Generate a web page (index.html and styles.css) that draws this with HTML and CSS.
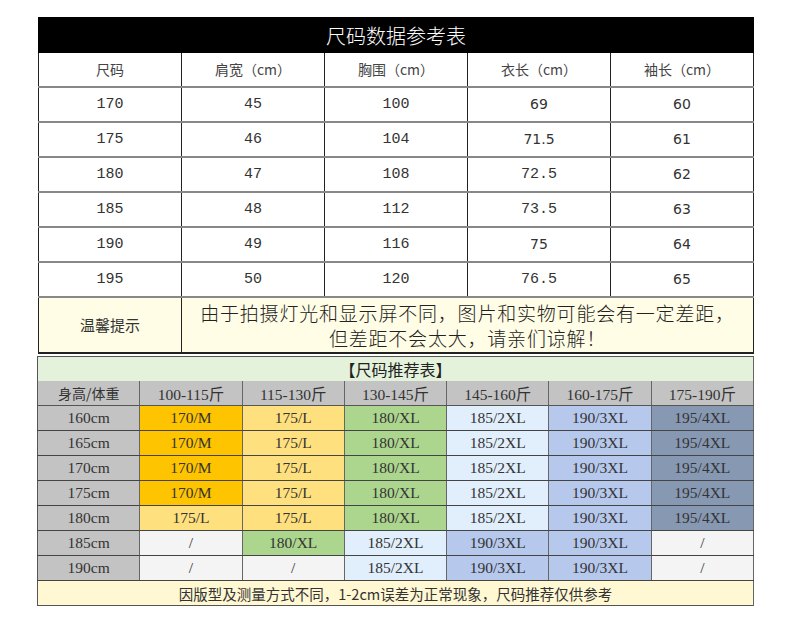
FILE: index.html
```html
<!DOCTYPE html>
<html lang="zh">
<head>
<meta charset="utf-8">
<link rel="stylesheet" href="styles.css">
</head>
<body>
<div class="page">
  <table class="size">
    <colgroup><col><col><col><col><col></colgroup>
    <tr class="title"><td colspan="5">尺码数据参考表</td></tr>
    <tr class="head"><td>尺码</td><td>肩宽（cm）</td><td>胸围（cm）</td><td>衣长（cm）</td><td>袖长（cm）</td></tr>
    <tr class="row"><td>170</td><td>45</td><td>100</td><td class="sans">69</td><td class="sans">60</td></tr>
    <tr class="row"><td>175</td><td>46</td><td>104</td><td class="sans">71.5</td><td class="sans">61</td></tr>
    <tr class="row"><td>180</td><td>47</td><td>108</td><td>72.5</td><td class="sans">62</td></tr>
    <tr class="row"><td>185</td><td>48</td><td>112</td><td>73.5</td><td class="sans">63</td></tr>
    <tr class="row"><td>190</td><td>49</td><td>116</td><td class="sans">75</td><td class="sans">64</td></tr>
    <tr class="row"><td>195</td><td>50</td><td>120</td><td>76.5</td><td class="sans">65</td></tr>
    <tr class="note"><td class="note-label">温馨提示</td><td colspan="4" class="note-text">由于拍摄灯光和显示屏不同，图片和实物可能会有一定差距，<br>但差距不会太大，请亲们谅解！</td></tr>
  </table>

  <table class="rec">
    <colgroup><col><col><col><col><col><col><col></colgroup>
    <tr class="rec-title"><td colspan="7">【尺码推荐表】</td></tr>
    <tr class="rec-head"><td>身高/体重</td><td>100-115斤</td><td>115-130斤</td><td>130-145斤</td><td>145-160斤</td><td>160-175斤</td><td>175-190斤</td></tr>
    <tr><td class="g">160cm</td><td class="o">170/M</td><td class="y">175/L</td><td class="gr">180/XL</td><td class="lb">185/2XL</td><td class="p">190/3XL</td><td class="s">195/4XL</td></tr>
    <tr><td class="g">165cm</td><td class="o">170/M</td><td class="y">175/L</td><td class="gr">180/XL</td><td class="lb">185/2XL</td><td class="p">190/3XL</td><td class="s">195/4XL</td></tr>
    <tr><td class="g">170cm</td><td class="o">170/M</td><td class="y">175/L</td><td class="gr">180/XL</td><td class="lb">185/2XL</td><td class="p">190/3XL</td><td class="s">195/4XL</td></tr>
    <tr><td class="g">175cm</td><td class="o">170/M</td><td class="y">175/L</td><td class="gr">180/XL</td><td class="lb">185/2XL</td><td class="p">190/3XL</td><td class="s">195/4XL</td></tr>
    <tr><td class="g">180cm</td><td class="y">175/L</td><td class="y">175/L</td><td class="gr">180/XL</td><td class="lb">185/2XL</td><td class="p">190/3XL</td><td class="s">195/4XL</td></tr>
    <tr><td class="g">185cm</td><td class="lg">/</td><td class="gr">180/XL</td><td class="lb">185/2XL</td><td class="p">190/3XL</td><td class="p">190/3XL</td><td class="lg">/</td></tr>
    <tr><td class="g">190cm</td><td class="lg">/</td><td class="lg">/</td><td class="lb">185/2XL</td><td class="p">190/3XL</td><td class="p">190/3XL</td><td class="lg">/</td></tr>
    <tr class="rec-foot"><td colspan="7">因版型及测量方式不同，1-2cm误差为正常现象，尺码推荐仅供参考</td></tr>
  </table>
</div>
</body>
</html>
```

FILE: styles.css
```css
* { box-sizing: border-box; }
html, body { margin: 0; padding: 0; background: #fff; }
.page {
  width: 790px;
  padding: 17px 0 0 38px;
}
table {
  border-collapse: collapse;
  table-layout: fixed;
}
td {
  padding: 0;
  text-align: center;
  vertical-align: middle;
}

/* top size table */
.size {
  width: 716px;
  font-family: "Liberation Mono", "Noto Sans CJK SC", monospace;
  color: #333;
}
.size td {
  border-left: 1px solid #222;
  border-right: 1px solid #222;
  border-bottom: 2px solid #888;
}
.size .title td {
  background: #000;
  color: #fff;
  height: 35px;
  font-family: "Noto Sans CJK SC", sans-serif;
  font-size: 20px;
  font-weight: 300;
  border: 1px solid #000;
}
.size .head td {
  height: 34px;
  font-family: "Noto Sans CJK SC", sans-serif;
  font-size: 14px;
  color: #444;
}
.size .row td {
  height: 35px;
  font-size: 15px;
}
.size .row td.sans {
  font-family: "DejaVu Sans", sans-serif;
  font-size: 14px;
}
.size .note td {
  height: 56px;
  background: #FFFDE6;
  border-bottom: 2px solid #222;
  font-family: "Noto Sans CJK SC", sans-serif;
}
.note-label {
  font-size: 15px;
  color: #333;
}
.note-text {
  font-size: 19px;
  font-weight: 300;
  line-height: 25px;
  color: #222;
  letter-spacing: 0.8px;
}

/* recommendation table */
.rec {
  margin-top: 2px;
  margin-left: -1px;
  width: 717px;
  font-family: "Liberation Serif", "Noto Sans CJK SC", serif;
  font-size: 15.5px;
  color: #333;
  border: 1px solid #555;
}
.rec td {
  height: 25px;
  border-right: 1px solid #666;
  border-bottom: 1px solid #444;
}
.rec-title td {
  height: 22px;
  background: #E4F1DB;
  font-family: "Noto Sans CJK SC", serif;
  font-size: 16px;
  color: #222;
  border-bottom: none;
}
.rec-head td {
  background: #C3C3C3;
  border-bottom: 1px solid #555;
}
.rec-head td:first-child {
  font-family: "Noto Sans CJK SC", sans-serif;
  font-size: 14px;
}
.rec-foot td {
  background: #FFF8D3;
  font-family: "Noto Sans CJK SC", serif;
  font-size: 14.5px;
  border-bottom: none;
}
.g  { background: #C3C3C3; }
.o  { background: #FFC400; }
.y  { background: #FFE07E; }
.gr { background: #ACD58E; }
.lb { background: #E1EEFB; }
.p  { background: #B6C8EB; }
.s  { background: #8798B2; }
.lg { background: #F4F4F4; }
```
